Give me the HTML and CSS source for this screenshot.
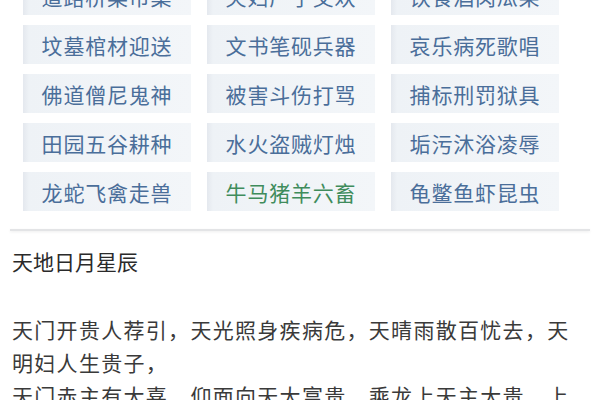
FILE: index.html
```html
<!DOCTYPE html>
<html lang="zh-CN">
<head>
    <meta charset="UTF-8" />
    <meta name="viewport" content="width=device-width, initial-scale=1" />
    <title>天地日月星辰</title>
    <link rel="stylesheet" href="styles.css">
</head>
<body>
    <div class="page">
        <div class="tags">
            <span class="tag">道路桥梁市集</span>
            <span class="tag">夫妇产子交欢</span>
            <span class="tag">饮食酒肉瓜果</span>
            <span class="tag">坟墓棺材迎送</span>
            <span class="tag">文书笔砚兵器</span>
            <span class="tag">哀乐病死歌唱</span>
            <span class="tag">佛道僧尼鬼神</span>
            <span class="tag">被害斗伤打骂</span>
            <span class="tag">捕标刑罚狱具</span>
            <span class="tag">田园五谷耕种</span>
            <span class="tag">水火盗贼灯烛</span>
            <span class="tag">垢污沐浴凌辱</span>
            <span class="tag">龙蛇飞禽走兽</span>
            <span class="tag green">牛马猪羊六畜</span>
            <span class="tag">龟鳖鱼虾昆虫</span>
        </div>

        <div class="divider"></div>

        <div class="article">
            <h3>天地日月星辰</h3>
            <p>天门开贵人荐引，天光照身疾病危，天晴雨散百忧去，天明妇人生贵子，<br>天门赤主有大喜，仰面向天大富贵，乘龙上天主大贵，上天入地皆无碍。</p>
        </div>
    </div>
</body>
</html>
```

FILE: styles.css
```css
body {
    margin: 0;
    background: #fff;
    font-family: "Noto Sans CJK SC", "Noto Sans", sans-serif;
    color: #333;
}

.page {
    width: 600px;
    height: 400px;
    overflow: hidden;
}

/* tag grid */
.tags {
    display: grid;
    grid-template-columns: repeat(3, 168px);
    grid-auto-rows: 39px;
    column-gap: 16px;
    row-gap: 10px;
    padding-left: 23px;
    margin-top: -24px;
}
.tag {
    display: flex;
    align-items: center;
    justify-content: center;
    background: linear-gradient(to right, #e4e8ee, #eef2f6 6px, #f3f6f9);
    color: #4a6e9a;
    font-size: 21px;
    letter-spacing: 0.8px;
}
.tag.green {
    color: #3f8c5c;
}

.divider {
    margin: 18px 10px 0;
    height: 2px;
    background: #e3e4e6;
    box-shadow: 0 1px 3px rgba(0,0,0,0.08);
}

/* article */
.article {
    padding: 0 12px;
}
.article h3 {
    margin: 16px 0 0;
    font-size: 21px;
    font-weight: 400;
    line-height: 28px;
    color: #2a2a2a;
}
.article p {
    margin: 38px 0 0;
    font-size: 21px;
    line-height: 33px;
    letter-spacing: 1.3px;
    color: #3a3a3a;
}
```
